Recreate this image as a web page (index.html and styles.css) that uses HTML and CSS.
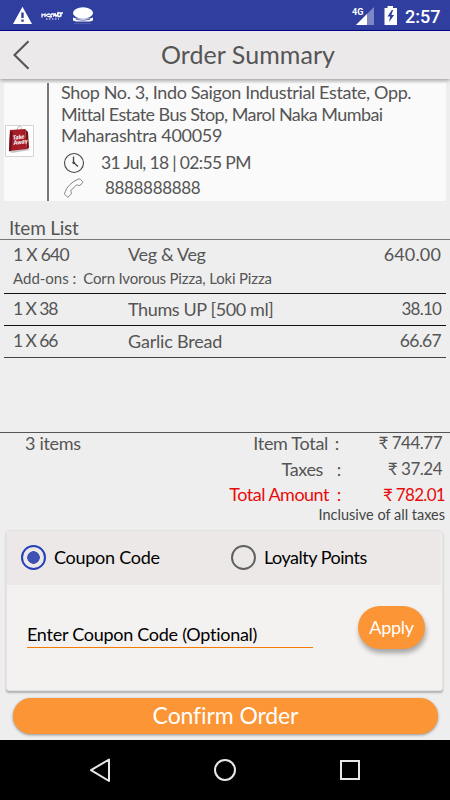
FILE: index.html
```html
<!DOCTYPE html>
<html lang="en">
<head>
<meta charset="utf-8">
<title>Order Summary</title>
<link rel="stylesheet" href="styles.css">
</head>
<body>
<div class="status">
  <svg class="status-left" width="110" height="30" viewBox="0 0 110 30">
    <path fill="#fff" fill-rule="evenodd" d="M22.500 6.800 32 24H13zM21.300 12.500v5.500h2.400v-5.500zm0 7v2.300h2.400v-2.300z"/>
    <g fill="none" stroke="#fff">
      <path stroke-width="1.300" d="M42 13.500v4M42 15.500l3-1.500v3M46 15.500q3-3 5 0t-5 0M51 14h5M53 16.500l2-2 1 2 2-3v3h2l1-3v3M57 13h6"/>
      <path stroke-width="1" stroke-dasharray="1.500 1.500" d="M46 19h13"/>
    </g>
    <ellipse cx="83" cy="13" rx="10" ry="5.800" fill="#fff"/>
    <path fill="#fff" d="M73 17.500l3 1h14l3-1v3l-3 1H76l-3-1z"/>
    <path stroke="#5a66b5" stroke-width=".8" d="M74 23.400h17"/>
    <path stroke="#303f9f" stroke-width=".8" d="M76 19.400q7 1.600 14 0" fill="none"/>
  </svg>
  <div class="status-right">
    <svg width="48" height="30" viewBox="350 0 48 30">
      <path fill="#7d87c6" d="M374 7v18h-18z"/>
      <path fill="#fff" d="M367 14v11h-11z"/>
      <path fill="#303f9f" d="M350 5h14v11h-14z"/>
      <path fill="#fff" fill-rule="evenodd" d="M387.500 6h5.500v2h4v17h-12.500V8h3zM391.800 10l-4.300 6.500h2.600l-1 5.500 5-7h-2.700l1.700-5z"/>
    </svg>
    <span class="net">4G</span>
    <span class="clock">2:57</span>
  </div>
</div>
<header class="header">
  <svg class="back" width="20" height="32" viewBox="0 0 20 32"><path d="M16.500 2.300 2.500 16l14 13.700" fill="none" stroke="#555" stroke-width="2.100"/></svg>
  <h1 class="title">Order Summary</h1>
</header>
<main>
  <section class="shop">
    <div class="thumb">
      <svg width="30" height="32" viewBox="0 0 30 32">
        <path fill="#fff" stroke="#d4d4d4" d="M.5.5h28v31H.5z"/>
        <path fill="#c8c5c5" d="m20 22 5 3-18 3-4-2z"/>
        <path fill="none" stroke="#c6ae9c" stroke-width=".8" d="M12 5q1-5 3-4t1 4"/>
        <path fill="#a51d28" d="m5 5 15-1 2 20-18 2z"/>
        <path fill="#731018" d="m20 4 3 3 1 16-2 1zM5 5 8 8 6 26H4z"/>
      </svg>
      <span class="thumb-text">Take<br>Away</span>
    </div>
    <div class="details">
      <p class="a1">Shop No. 3, Indo Saigon Industrial Estate, Opp.</p>
      <p class="a2">Mittal Estate Bus Stop, Marol Naka Mumbai</p>
      <p class="a3">Maharashtra 400059</p>
      <div class="info">
        <svg width="22" height="22" viewBox="0 0 22 22"><circle cx="11" cy="11" r="9.500" fill="none" stroke="#444" stroke-width="1.100"/><path d="M10.500 4.500v6l4.500 4" fill="none" stroke="#444" stroke-width="1.300"/><circle cx="10.700" cy="10.800" r="1.300" fill="#444"/></svg>
        <span class="date">31 Jul, 18 | 02:55 PM</span>
      </div>
      <div class="info phone-row">
        <svg width="22" height="22" viewBox="0 0 22 22"><path d="M14 2.800q1.800-1.900 3.400-.5l1.900 1.900q1 1.100-.2 2.300l-2.200 1.800q-1 .8-2.200-.3-.7-.6-1.500.2l-5 5q-.8.900-.1 1.600.9 1 .1 2l-2.300 2.700q-1 1-2.100 0l-1.800-1.800q-1.200-1.300.3-3Q3 11.300 7 7.500t7-4.700z" fill="none" stroke="#666" stroke-width=".8"/></svg>
        <span class="phone">8888888888</span>
      </div>
    </div>
  </section>
  <h2 class="list-title"><span>Item List</span></h2>
  <section class="items">
    <div class="item first">
      <div class="line"><span class="qty q1">1 X 640</span><span class="n1">Veg &amp; Veg</span><span class="price p1">640.00</span></div>
      <div class="addons"><span>Add-ons :</span><span class="addon-list">Corn Ivorous Pizza, Loki Pizza</span></div>
    </div>
    <div class="item"><div class="line"><span class="qty q2">1 X 38</span><span class="n2">Thums UP [500 ml]</span><span class="price p2">38.10</span></div></div>
    <div class="item last"><div class="line"><span class="qty q2">1 X 66</span><span class="n3">Garlic Bread</span><span class="price p3">66.67</span></div></div>
  </section>
  <section class="totals">
    <div class="total"><span class="count">3 items</span><span class="label l1">Item Total</span><span class="colon c1">:</span><span class="amount m1">₹ 744.77</span></div>
    <div class="total"><span class="label l2">Taxes</span><span class="colon c2">:</span><span class="amount m2">₹ 37.24</span></div>
    <div class="total grand"><span class="label l3">Total Amount</span><span class="colon c3">:</span><span class="amount m3">₹ 782.01</span></div>
    <div class="note">Inclusive of all taxes</div>
  </section>
  <section class="card">
    <div class="options">
      <span class="radio on"></span><span class="option o1">Coupon Code</span>
      <span class="radio off"></span><span class="option o2">Loyalty Points</span>
    </div>
    <div class="coupon">
      <div class="field"><span>Enter Coupon Code (Optional)</span></div>
      <div class="apply"><span>Apply</span></div>
    </div>
  </section>
  <div class="confirm"><span>Confirm Order</span></div>
</main>
<nav class="nav">
  <svg width="450" height="60" viewBox="0 740 450 60" fill="none" stroke="#e8e8e8" stroke-width="2">
    <path d="M109 759.500v21.500L91 770.200z" stroke-linejoin="round"/>
    <circle cx="225" cy="770" r="10"/>
    <path d="M341 761h18v18h-18z"/>
  </svg>
</nav>
</body>
</html>
```

FILE: styles.css
```css
* { box-sizing: border-box; }
body {
  margin: 0;
  width: 450px;
  height: 800px;
  overflow: hidden;
  display: flex;
  flex-direction: column;
  background: #eee;
  color: #555;
  font-family: Lato, "Noto Sans", sans-serif;
  font-size: 18px;
  font-variant-ligatures: none;
  white-space: nowrap;
}
h1, h2, p { margin: 0; font-weight: 400; }
svg { display: block; flex: none; }
.status {
  height: 31px;
  flex: none;
  display: flex;
  justify-content: space-between;
  background: #303f9f;
  border-bottom: 1px solid #06069a;
  color: #fff;
  font-family: Roboto, sans-serif;
}
.status-right { position: relative; display: flex; width: 100px; }
.net { position: absolute; left: 2px; top: 6px; font-size: 9px; line-height: 12px; font-weight: 700; }
.clock { font-size: 18px; line-height: 33px; font-weight: 500; margin-left: 7px; }
.header {
  height: 48px;
  flex: none;
  display: flex;
  align-items: center;
  background: #ebe9e9;
  box-shadow: 0 1px 4px rgba(0, 0, 0, .4);
  position: relative;
}
.back { margin-left: 12px; }
.title { margin-left: 129px; font-size: 25px; line-height: 46px; letter-spacing: .05px; padding-bottom: 2px; }
main { flex: 1; display: flex; flex-direction: column; }
.shop { display: flex; height: 118px; margin: 4px 4px 0; background: #fafafa; }
.thumb { width: 45px; border-right: 2px solid #777; padding: 42px 0 0 1px; position: relative; }
.thumb-text {
  position: absolute; left: 9px; top: 51px;
  color: #fff; font-size: 6px; line-height: 5px; font-weight: 900; font-style: italic;
  transform: rotate(-8deg);
}
.details { padding-left: 12px; margin-top: -1px; }
.details p { line-height: 21.500px; }
.details .a1 { letter-spacing: -.37px; }
.details .a2 { letter-spacing: -.56px; }
.details .a3 { letter-spacing: -.3px; }
.info { display: flex; align-items: center; height: 26px; padding-left: 2px; margin-top: 3px; }
.phone-row { height: 24px; margin-top: 0; }
.date { margin-left: 16px; font-size: 17.500px; letter-spacing: -.66px; }
.phone { margin-left: 20px; font-size: 17px; letter-spacing: -.33px; }
.list-title { height: 39px; padding: 14px 9px 0; font-size: 19px; line-height: 26px; letter-spacing: -.22px; border-bottom: 1px solid #777; }
.items { margin: 0 4px; height: 192px; }
.item { height: 32px; border-bottom: 1px solid #111; }
.item.first { height: 54px; }
.item.last { border-color: #444; }
.line { display: flex; align-items: center; height: 31px; padding: 0 5px 2px 9px; }
.first .line { padding-bottom: 3px; }
.qty { width: 115px; font-size: 17.500px; }
.q1 { letter-spacing: -.7px; }
.q2 { letter-spacing: -1.050px; }
.n1 { letter-spacing: -.35px; }
.n2 { letter-spacing: -.38px; }
.n3 { letter-spacing: -.2px; }
.price { margin-left: auto; }
.p1 { letter-spacing: .15px; }
.p2 { font-size: 17px; letter-spacing: -.8px; }
.p3 { font-size: 17.500px; letter-spacing: -.7px; }
.addons { display: flex; gap: 7px; padding-left: 9px; margin-top: -2px; font-size: 15px; line-height: 19px; }
.addon-list { letter-spacing: -.17px; }
.totals { border-top: 1px solid #555; height: 98px; }
.total { display: flex; height: 25.700px; line-height: 20px; padding-right: 8px; }
.count { width: 120px; padding-left: 25px; letter-spacing: -.3px; }
.label { margin-left: auto; }
.l1 { letter-spacing: -.3px; margin-right: -1px; }
.l2 { letter-spacing: -.4px; }
.l3 { letter-spacing: -.5px; }
.colon { width: 23px; text-align: center; }
.c1 { padding-right: 3px; }
.c2 { width: 27px; padding-left: 5px; }
.c3 { width: 24px; padding-right: 4px; }
.amount { width: 92px; text-align: right; font-size: 17px; }
.m1, .m2 { letter-spacing: -.5px; }
.m3 { letter-spacing: -.7px; }
.grand { color: #e80b0b; padding-right: 5px; line-height: 21px; }
.note { text-align: right; padding-right: 5px; margin-top: -5px; font-size: 14.500px; line-height: 20px; color: #444; }
.card { width: 437px; height: 161px; margin-left: 6px; background: #f4f2f1; border: 1px solid #e4e2e2; border-radius: 3px; box-shadow: 0 2px 2px rgba(0, 0, 0, .25); }
.options { display: flex; align-items: center; height: 54px; padding-bottom: 2px; width: 434px; background: #ece8e7; color: #000; }
.radio { width: 25px; height: 25px; border: 2px solid #616161; border-radius: 50%; flex: none; }
.on { margin-left: 14px; border-color: #2540b8; background: radial-gradient(circle, #3f51b5 6px, transparent 6.500px); }
.option { margin-left: 8px; padding-bottom: 1px; }
.o1 { width: 177px; letter-spacing: -.27px; }
.o2 { letter-spacing: -.5px; }
.coupon { display: flex; color: #000; }
.field { width: 286px; height: 63px; margin-left: 20px; padding-top: 37px; border-bottom: 1px solid #f57c00; line-height: 24px; letter-spacing: -.27px; }
.apply { width: 67px; height: 43px; margin: 21px 0 0 45px; border-radius: 22px; background: #fb9535; color: #fff; line-height: 43px; letter-spacing: -.3px; text-align: center; box-shadow: 1px 4px 5px rgba(0, 0, 0, .32); }
.confirm { width: 425px; height: 36px; margin: 7px 0 0 13px; border-radius: 18px; background: #fb9535; color: #fff; font-size: 23px; line-height: 34px; letter-spacing: -.1px; text-align: center; box-shadow: 0 1px 3px rgba(0, 0, 0, .4); }
.nav { height: 60px; background: #000; flex: none; }
```
